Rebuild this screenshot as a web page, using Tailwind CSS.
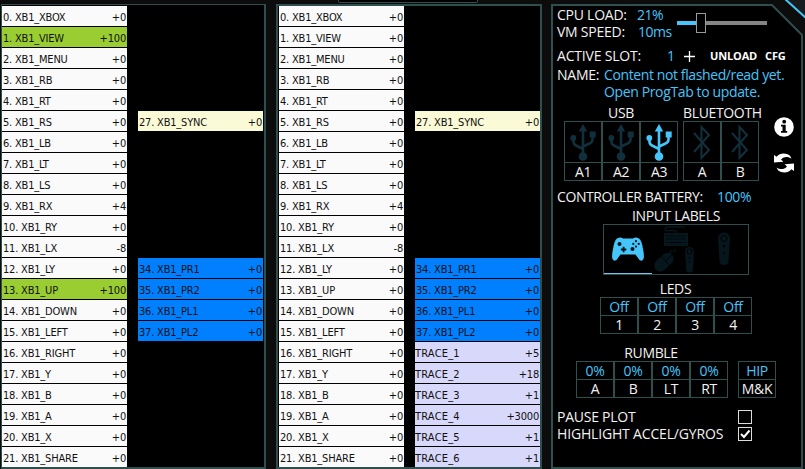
<!DOCTYPE html>
<html lang="en">
<head>
<meta charset="utf-8">
<title>Device Monitor</title>
<script src="https://cdn.jsdelivr.net/npm/@tailwindcss/browser@4"></script>
</head>
<body class="w-[805px] h-[469px] overflow-hidden bg-[#0c0c0c] relative">
<div class="absolute left-[338px] top-0 w-[140px] h-[3px] border border-t-0 border-[#2f4f4f] rounded-b-xs bg-black"></div>
<main class="flex h-[469px] pt-1 font-['DejaVu_Sans_Condensed','DejaVu_Sans',sans-serif] text-[11px] tracking-[-0.2px] text-[#111]">
  <section class="w-[265px] ml-px mr-[10px] h-[465px] bg-black border-2 border-t-1 border-l-1 border-[#2f4f4f] pt-px flex gap-[11px]">
    <div id="a1" class="w-[125px]"></div>
    <div id="a2" class="w-[125px]"></div>
  </section>
  <section class="w-[266px] mr-[9px] h-[465px] bg-black border-2 border-[#2f4f4f] pl-px flex gap-[11px]">
    <div id="b1" class="w-[125px]"></div>
    <div id="b2" class="w-[125px]"></div>
  </section>
  <section class="relative w-[252px] h-[465px] font-['Open_Sans','Noto_Sans',sans-serif] text-[14px] tracking-[-0.35px] text-[#f2f2f2] leading-[17px]">
    <svg class="absolute left-0 -top-1 w-[254px] h-[469px]" viewBox="0 0 254 469">
      <path d="M235 0H254V17Z" fill="#171b1e"/>
      <path d="M234-1 255 18" stroke="#45c5fa" stroke-width="2"/>
      <path d="M1 5H221L251 35V468H1Z" fill="#000" stroke="#2f4f4f" stroke-width="2"/>
    </svg>
    <div class="relative pl-[6px] pt-[2px]">
      <div class="flex h-[34px]">
        <div class="w-[80px] tracking-[-0.25px]"><div>CPU LOAD:</div><div>VM SPEED:</div></div>
        <div class="w-[40px] text-[#45c5fa] tracking-[-0.5px]"><div>21%</div><div class="pl-px">10ms</div></div>
        <div class="relative mt-[15px] h-1 w-[90px] bg-[#858585]">
          <div class="h-1 w-[19px] bg-[#45c5fa]"></div>
          <div class="absolute left-[19px] -top-2 w-[10px] h-[20px] bg-black border border-[#999]"></div>
        </div>
      </div>
      <div class="flex mt-[7px] h-[17px]">
        <div class="w-[110px] tracking-[-0.2px]">ACTIVE SLOT:</div><div class="w-[17px] text-[#45c5fa]">1</div>
        <svg class="w-[11px] h-[11px] mt-1" viewBox="0 0 11 11"><path d="M5.500 0V11M0 5.500H11" stroke="#fff" stroke-width="1.3"/></svg>
        <div class="ml-[15px] w-[55px] font-bold text-[11px] tracking-[-0.15px] text-white">UNLOAD</div><div class="font-bold text-[11px] tracking-[-0.1px] text-white">CFG</div>
      </div>
      <div class="flex mt-[2px] h-[34px] whitespace-nowrap">
        <div class="w-[47px] tracking-[-0.25px]">NAME:</div><div class="text-[#45c5fa]"><div class="tracking-[-0.39px]">Content not flashed/read yet.</div><div class="tracking-[-0.37px]">Open ProgTab to update.</div></div>
      </div>
      <div class="flex mt-1 pl-[7px] h-[84px]">
        <div class="w-[114px] text-center">
          <div class="h-[17px]">USB</div>
          <div id="usb" class="flex"></div>
        </div>
        <div class="w-[76px] ml-[5px] text-center">
          <div class="h-[17px]">BLUETOOTH</div>
          <div id="bt" class="flex"></div>
        </div>
        <div class="ml-[15px] mt-[13px] flex flex-col gap-4">
          <svg class="w-5 h-5" viewBox="0 0 20 20"><circle cx="10" cy="10" r="9.800" fill="#fff"/><circle cx="10.200" cy="4.700" r="1.900" fill="#000"/><path d="M7 7.800H11.700V14H13.200V15.800H7V14H8.500V9.400H7Z" fill="#000"/></svg>
          <svg class="w-5 h-5" viewBox="0 0 20 20" fill="#fff"><path d="M0 2 2.600 3.800C6-.3 12-.3 16 2.800L17.500 5.600C14 3.400 10 3.200 7 6.600L9.400 8.800 0 9.600Z"/><path d="M20 18 17.400 16.200C14 20.300 8 20.300 4 17.200L2.500 14.400C6 16.600 10 16.800 13 13.400L10.600 11.200 20 10.400Z"/></svg>
        </div>
      </div>
      <div class="flex h-[17px]"><div class="w-[160px] tracking-[-0.4px]">CONTROLLER BATTERY:</div><div class="text-[#45c5fa]">100%</div></div>
      <div class="ml-[46px] mt-[2px] w-[146px] text-center">INPUT LABELS</div>
      <svg class="ml-[46px] w-[146px] h-[51px]" viewBox="0 0 146 51">
        <rect x=".5" y=".5" width="145" height="50" stroke="#2f4f4f" fill="none"/>
        <path d="M1 49.500H49" stroke="#6ec6ee"/>
        <path d="M14 14.500Q17.500 12.600 20 14.500H30Q32.500 12.600 36 14.500Q39 17 40 25Q41.500 32 40.500 35Q39 38 36.500 36L32.500 30.500H17.500L13.500 36Q11 38 9.500 35Q8.500 32 10 25Q11 17 14 14.500Z" fill="#45c5fa"/>
        <g fill="#03151e"><circle cx="16.500" cy="20" r="2"/><circle cx="29.500" cy="25" r="2"/><path d="M19.700 22.800h1.800v1.800h1.800v1.800h-1.800v1.800h-1.800v-1.800h-1.800v-1.800h1.800z"/><circle cx="33" cy="17.200" r="1.100"/><circle cx="33" cy="22.600" r="1.100"/><circle cx="30.300" cy="19.900" r="1.100"/><circle cx="35.700" cy="19.900" r="1.100"/></g>
        <g stroke="#05161d" fill="none"><path d="M73 9V8Q73 6.500 70 6.500H64Q62 6.500 62 4.700Q62 3 64 3H82" stroke-width="1.300"/><rect x="61.500" y="9.500" width="23" height="12" fill="#05161d"/><path d="M68 30Q66 27 69 27 74 28 72 25" stroke-width="1.200"/></g>
        <path d="M63 12H83M63 15H83M63 18.500H66M80 18.500H83" stroke="#000" stroke-dasharray="1.300 .9"/><path d="M67 18.500H79" stroke="#000"/>
        <g transform="rotate(48 60.500 38.500)"><rect x="54.500" y="27" width="12" height="22" rx="6" fill="#05161d"/><path d="M54 36H67M60.500 27V36" stroke="#000" stroke-width=".8"/></g>
        <g fill="#05161d"><path d="M82 27.500a4.500 4.500 0 0 1 9 0L90 45q0 3.500-3.500 3.500T83 45Z"/><path d="M115 14.500a6 6 0 0 1 12 0L125.500 37q0 4-4.500 4t-4.500-4Z"/></g>
        <g fill="none" stroke="#000"><circle cx="86.500" cy="27.500" r="2.500"/><circle cx="121" cy="14.500" r="3"/></g><g fill="#000"><circle cx="86.500" cy="34" r=".8"/><circle cx="86.500" cy="38" r=".8"/><circle cx="121" cy="22" r="1.200"/><circle cx="121" cy="29" r="1"/></g>
      </svg>
      <div class="ml-[43px] mt-[5px] w-[151px] text-center h-[17px]">LEDS</div>
      <div id="leds" class="ml-[43px] flex text-center"></div>
      <div class="ml-[19px] mt-[10px] w-[150px] h-[17px] text-center">RUMBLE</div>
      <div id="rumble" class="ml-[19px] flex text-center"></div>
      <div class="flex mt-[10px] h-[17px]"><div class="w-[181px] tracking-[-0.25px]">PAUSE PLOT</div><div class="mt-[2px] w-[14px] h-[14px] border border-[#ddd]"></div></div>
      <div class="flex h-[17px]"><div class="w-[181px] tracking-[-0.17px]">HIGHLIGHT ACCEL/GYROS</div><svg class="mt-[2px] w-[14px] h-[14px]" viewBox="0 0 14 14" fill="none"><rect x=".5" y=".5" width="13" height="13" stroke="#ddd"/><path d="M3 7 6 10 11.500 3.500" stroke="#fff" stroke-width="2"/></svg></div>
    </div>
  </section>
</main>
<script>
const bg = {w:'bg-[#fafafa]', g:'bg-[#9acd32]', y:'bg-[#fafad6]', b:'bg-[#0080ff]', l:'bg-[#d8d8fa]'};
const row = (n, v, c) => `<div class="h-[20px] mb-px ${c == 'l' ? '' : 'pl-px'} pr-[1px] leading-[23px] flex justify-between whitespace-nowrap ${bg[c]}"><span class="${c == 'l' ? 'tracking-[0.2px]' : ''}">${n}</span><span>${v}</span></div>`;
const gap = n => '<div class="h-[21px]"></div>'.repeat(n);
const names = 'XBOX VIEW MENU RB RT RS LB LT LS RX RY LX LY UP DOWN LEFT RIGHT Y B A X SHARE'.split(' ');
const col = hot => names.map((n, i) => { const h = hot && (i == 1 || i == 13); return row(`${i}. XB1_${n}`, h ? '+100' : i == 9 ? '+4' : i == 11 ? '-8' : '+0', h ? 'g' : 'w'); }).join('');
const extra = gap(5) + row('27. XB1_SYNC', '+0', 'y') + gap(6) + ['34. XB1_PR1','35. XB1_PR2','36. XB1_PL1','37. XB1_PL2'].map(n => row(n, '+0', 'b')).join('');
const put = (id, h) => document.getElementById(id).innerHTML = h;
put('a1', col(true)); put('a2', extra); put('b1', col(false));
put('b2', extra + ['+5','+18','+1','+3000','+1','+1'].map((v, i) => row('TRACE_' + (i + 1), v, 'l')).join(''));
const usb = c => `<svg class="w-[26px] h-[37px] ${c}" viewBox="0 0 26 37" fill="currentColor"><circle cx="13" cy="32.500" r="4.300"/><path d="M13 0 17.200 7.500H8.800Z"/><path d="M13 6V32M3.500 14V18Q3.500 20.500 7 22L13 25M22.500 11V15.500Q22.500 18.500 19 19.700L13 22.500" stroke="currentColor" stroke-width="2.600" fill="none"/><circle cx="3.300" cy="14" r="2.900"/><rect x="19.700" y="7.500" width="6" height="6"/></svg>`;
const bt = '<svg class="w-[20px] h-[37px] text-[#12303c]" viewBox="0 0 20 37" fill="none" stroke="currentColor" stroke-width="2"><path d="M2 9 17 26 9.500 34V3L17 11 2 28"/></svg>';
const port = (i, l) => `<div class="w-[38px] h-[60px] border border-[#2f4f4f]"><div class="h-[40px] flex items-center justify-center">${i}</div><div class="border-t border-[#2f4f4f] h-[18px] leading-[18px]">${l}</div></div>`;
put('usb', port(usb('text-[#12303c]'), 'A1') + port(usb('text-[#12303c]'), 'A2') + port(usb('text-[#45c5fa]'), 'A3'));
put('bt', port(bt, 'A') + port(bt, 'B'));
const cell = (v, l, x = '') => `<div class="w-[38px] h-[37px] border border-[#2f4f4f] leading-[17px] ${x}"><div class="h-[17px] text-[#45c5fa]">${v}</div><div class="border-t border-[#2f4f4f] h-[18px] leading-[18px]">${l}</div></div>`;
put('leds', [1,2,3,4].map(n => cell('Off', n)).join(''));
put('rumble', ['A','B','LT','RT'].map(n => cell('0%', n)).join('') + cell('HIP', 'M&amp;K', 'ml-[10px]'));
</script>
</body>
</html>
